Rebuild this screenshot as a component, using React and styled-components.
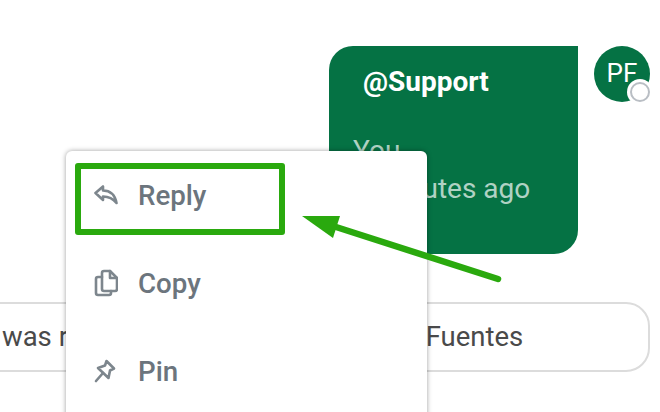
import React from "react";
import styled, { createGlobalStyle } from "styled-components";

const GlobalStyle = createGlobalStyle`
  html, body {
    margin: 0;
    padding: 0;
    background: #fff;
    overflow: hidden;
  }
  body {
    font-family: Roboto, "Liberation Sans", sans-serif;
  }
`;

const ReplyIcon = () => (
  <MenuSvg width="24" height="22" viewBox="0 0 24 22">
    <path d="M1.5 9 L9 2.5 V6.5 C16 6.5 21 11 22.5 19 C19 14.5 15 12.5 9 12.5 V16 Z" />
  </MenuSvg>
);

const CopyIcon = () => (
  <MenuSvg width="24" height="28" viewBox="0 0 24 28">
    <path d="M10 2 H16 L23 9 V20 A2 2 0 0 1 21 22 H10 A2 2 0 0 1 8 20 V4 A2 2 0 0 1 10 2 Z" />
    <path d="M16 2 V9 H23" />
    <path d="M8 8 H4 A2 2 0 0 0 2 10 V24 A2 2 0 0 0 4 26 H15 A2 2 0 0 0 17 24 V22" />
  </MenuSvg>
);

const PinIcon = () => (
  <MenuSvg width="22" height="24" viewBox="0 0 22 24">
    <path d="M12.5 2 L20 9.5 L16 11.5 L14.5 19 L4 9 L11 6.5 Z" />
    <path d="M9 14 L2 22" />
  </MenuSvg>
);

const menuItems = [
  { label: "Reply", Icon: ReplyIcon },
  { label: "Copy", Icon: CopyIcon },
  { label: "Pin", Icon: PinIcon },
];

export default function App() {
  return (
    <Page>
      <GlobalStyle />
      <MessageRow>
        <Bubble>
          <Mention>@Support</Mention>
          <Meta>
            <span>You</span>
            <span>2 minutes ago</span>
          </Meta>
        </Bubble>
        <Avatar>
          PF
          <Status />
        </Avatar>
      </MessageRow>
      <Notice>
        <NoticeText>was removed from group by Paula Fuentes</NoticeText>
      </Notice>

      <Menu>
        {menuItems.map(({ label, Icon }) => (
          <MenuItem key={label}>
            <IconSlot>
              <Icon />
            </IconSlot>
            {label}
          </MenuItem>
        ))}
      </Menu>

      <Highlight />
      <Arrow viewBox="0 0 210 80" aria-hidden="true">
        <path d="M198 67 L36 15" stroke="#2aa90e" strokeWidth="6.5" strokeLinecap="round" />
        <path d="M2 4 L40 4 L33 26 Z" fill="#2aa90e" />
      </Arrow>
    </Page>
  );
}

const Page = styled.div`
  position: relative;
  width: 660px;
  height: 412px;
  overflow: hidden;
  background: #fff;
`;

const MessageRow = styled.div`
  display: flex;
  justify-content: flex-end;
  align-items: flex-start;
  gap: 16px;
  padding: 46px 10px 0 0;
`;

const Bubble = styled.div`
  box-sizing: border-box;
  width: 249px;
  height: 208px;
  padding: 20px 24px 0;
  background: #057244;
  border-radius: 24px 0 24px 24px;
  color: #fff;
`;

const Mention = styled.div`
  margin-left: 10px;
  font-size: 28px;
  line-height: 32px;
  font-weight: 700;
`;

const Meta = styled.div`
  display: flex;
  flex-direction: column;
  margin-top: 34px;
  font-size: 28px;
  line-height: 38px;
  white-space: nowrap;
  color: rgba(255, 255, 255, 0.7);
`;

const Avatar = styled.div`
  position: relative;
  display: flex;
  align-items: center;
  justify-content: center;
  width: 56px;
  height: 56px;
  padding: 0 0 3px 0;
  box-sizing: border-box;
  border-radius: 50%;
  background: #057244;
  color: #fff;
  font-size: 26px;
`;

const Status = styled.span`
  position: absolute;
  right: 0;
  bottom: 0;
  box-sizing: border-box;
  width: 20px;
  height: 20px;
  border-radius: 50%;
  background: #fff;
  border: 2.5px solid #b9bec4;
  box-shadow: 0 0 0 3px #fff;
`;

const Notice = styled.div`
  box-sizing: border-box;
  display: flex;
  align-items: center;
  width: 680px;
  height: 70px;
  margin: 48px 0 0 -30px;
  padding: 0 0 2px 30px;
  border: 2px solid #dcdcdc;
  border-radius: 24px;
`;

const NoticeText = styled.div`
  font-size: 27.5px;
  color: #4a4a4a;
  white-space: nowrap;
`;

const Menu = styled.div`
  position: absolute;
  left: 66px;
  top: 151px;
  width: 361px;
  height: 300px;
  box-sizing: border-box;
  background: #fff;
  border-radius: 6px;
  box-shadow: 0 0 5px rgba(0, 0, 0, 0.38);
`;

const MenuItem = styled.div`
  display: flex;
  align-items: center;
  height: 88px;
  padding-left: 28px;
  font-size: 27.7px;
  font-weight: 500;
  color: #6c757d;
`;

const IconSlot = styled.span`
  display: flex;
  width: 45px;
  margin-right: -1px;
`;

const MenuSvg = styled.svg`
  fill: none;
  stroke: #7d868d;
  stroke-width: 2.6;
  stroke-linejoin: round;
  stroke-linecap: round;
`;

const Highlight = styled.div`
  position: absolute;
  left: 75px;
  top: 163px;
  box-sizing: border-box;
  width: 210px;
  height: 72px;
  border: 6px solid #2aa90e;
  border-radius: 3px;
`;

const Arrow = styled.svg`
  position: absolute;
  left: 300px;
  top: 212px;
  width: 210px;
  height: 80px;
`;
